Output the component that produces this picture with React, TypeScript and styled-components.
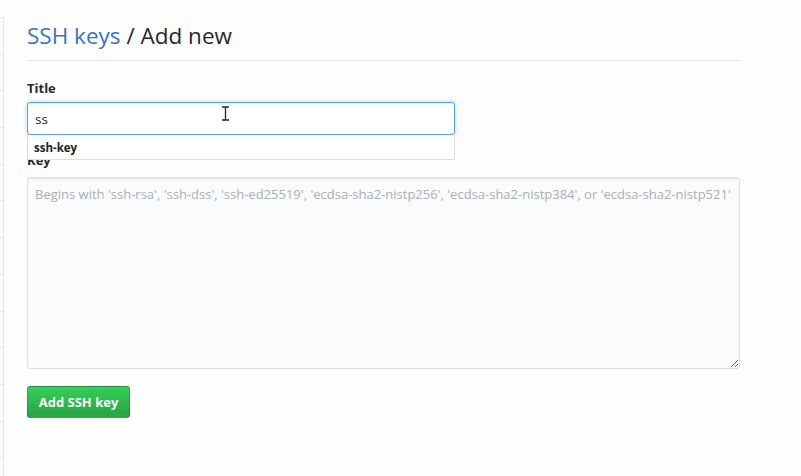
import styled, { createGlobalStyle } from "styled-components";

const GlobalStyle = createGlobalStyle`
  html, body {
    margin: 0;
    padding: 0;
    background: #fefefe;
  }
  body {
    font-family: "Open Sans", "Liberation Sans", sans-serif;
    color: #24292e;
  }
`;

const menuRows = Array.from({ length: 13 });

export default function App() {
  return (
    <>
      <GlobalStyle />
      <Page>
        <Sidebar>
          {menuRows.map((_, i) => (
            <MenuRow key={i} />
          ))}
        </Sidebar>
        <Main>
          <Heading>
            <HeadLink>SSH keys</HeadLink> / Add new
          </Heading>
          <Label>Title</Label>
          <TitleField>
            <TextInput value="ss" readOnly />
            <Caret width="9" height="15" viewBox="0 0 9 15">
              <path
                d="M1 1h7M4.5 1v13M1 14h7"
                stroke="#222"
                strokeWidth="1.3"
                fill="none"
              />
            </Caret>
            <Suggestions>
              <Suggestion>ssh-key</Suggestion>
            </Suggestions>
          </TitleField>
          <Label $top={15}>Key</Label>
          <KeyArea placeholder="Begins with 'ssh-rsa', 'ssh-dss', 'ssh-ed25519', 'ecdsa-sha2-nistp256', 'ecdsa-sha2-nistp384', or 'ecdsa-sha2-nistp521'" />
          <SubmitButton>Add SSH key</SubmitButton>
        </Main>
      </Page>
    </>
  );
}

const Page = styled.div`
  display: flex;
  width: 801px;
  height: 476px;
  overflow: hidden;
`;

const Sidebar = styled.div`
  width: 3px;
  margin-top: 17px;
  border-right: 1px solid #e1e4e8;
  border-top: 1px solid #e1e4e8;
  display: flex;
  flex-direction: column;
`;

const MenuRow = styled.div`
  height: 35.7px;
  flex-shrink: 0;
  border-bottom: 1px solid #e8eaed;
`;

const Main = styled.div`
  width: 713px;
  margin-left: 23px;
  display: flex;
  flex-direction: column;
  align-items: flex-start;
`;

const Heading = styled.h2`
  align-self: stretch;
  margin: 20px 0 0;
  padding-bottom: 8px;
  font-size: 22.5px;
  font-weight: 400;
  line-height: 32px;
  border-bottom: 1px solid #e1e4e8;
  color: #24292e;
`;

const HeadLink = styled.span`
  color: #3b73c4;
`;

const Label = styled.label<{ $top?: number }>`
  margin-top: ${(p) => p.$top ?? 17}px;
  margin-bottom: ${(p) => (p.$top ? 7 : 4)}px;
  font-size: 13px;
  font-weight: 700;
  line-height: 20px;
`;

const TitleField = styled.div`
  position: relative;
  width: 428px;
`;

const TextInput = styled.input`
  box-sizing: border-box;
  width: 100%;
  height: 33px;
  padding: 6px 7px;
  font-family: "Open Sans", "Liberation Sans", sans-serif;
  font-size: 13.5px;
  color: #24292e;
  background: #fff;
  border: 1px solid #51a7e8;
  border-radius: 3px;
  outline: none;
  box-shadow: inset 0 1px 2px rgba(0, 0, 0, 0.075),
    0 0 4px rgba(81, 167, 232, 0.5);
`;

const Caret = styled.svg`
  position: absolute;
  left: 194px;
  top: 4px;
`;

const Suggestions = styled.div`
  position: absolute;
  left: 0;
  top: 33px;
  width: 100%;
  background: #fff;
  border: 1px solid #ddd;
  border-top: none;
  box-sizing: border-box;
  z-index: 2;
`;

const Suggestion = styled.div`
  padding: 5px 6px 4px;
  font-size: 11.5px;
  font-weight: 700;
  line-height: 15px;
  color: #222;
`;

const KeyArea = styled.textarea`
  box-sizing: border-box;
  width: 713px;
  height: 192px;
  padding: 6px 4px 6px 7px;
  font-family: "Open Sans", "Liberation Sans", sans-serif;
  font-size: 13px;
  line-height: 20px;
  background: #fafbfc;
  border: 1px solid #dcdfe2;
  border-radius: 3px;
  box-shadow: inset 0 1px 2px rgba(27, 31, 35, 0.075);
  resize: vertical;
  outline: none;

  &::placeholder {
    color: #acafb2;
  }
`;

const SubmitButton = styled.button`
  margin-top: 17px;
  width: 103px;
  height: 32px;
  padding: 0;
  font-family: "Open Sans", "Liberation Sans", sans-serif;
  font-size: 13px;
  font-weight: 700;
  color: #fff;
  background-image: linear-gradient(-180deg, #34d058 0%, #28a745 90%);
  border: 1px solid rgba(27, 31, 35, 0.2);
  border-radius: 3px;
  cursor: pointer;
`;
